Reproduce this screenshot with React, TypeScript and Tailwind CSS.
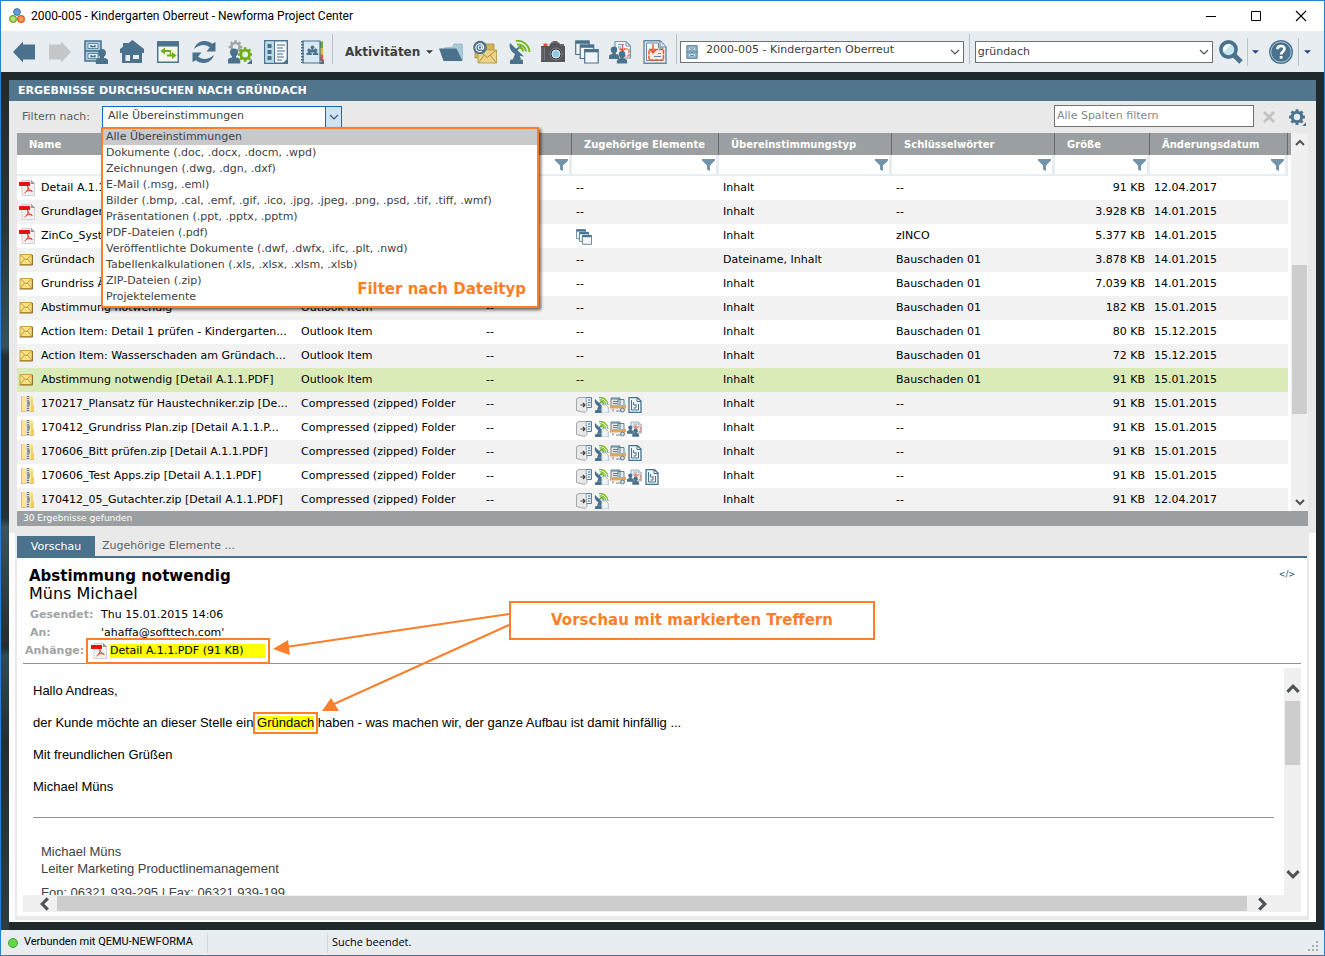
import React from "react";

type IconProps = { className?: string };
const B = "#4a728c";

const Svg = ({ children, className = "size-6", box = "0 0 24 24" }: { children: React.ReactNode; className?: string; box?: string }) => (
  <svg viewBox={box} className={`shrink-0 ${className}`} aria-hidden="true">
    {children}
  </svg>
);

const Bust = ({ x, y, s = 1 }: { x: number; y: number; s?: number }) => (
  <g transform={`translate(${x} ${y}) scale(${s})`} fill={B}>
    <circle cx="6" cy="4" r="3.9" />
    <path d="M4 6h4v3c3 .3 4.200 1.300 4.200 3.800V15H-.2v-2.200C-.2 10.300 1 9.300 4 9z" />
  </g>
);

const Gear = ({ x, y, r, c }: { x: number; y: number; r: number; c: string }) => (
  <g transform={`translate(${x} ${y})`} fill="none" stroke={c}>
    <circle r={r * 0.6} strokeWidth={r * 0.38} />
    {[0, 45, 90, 135].map((a) => (
      <g key={a} transform={`rotate(${a})`}>
        <path d={`M0 ${-r}V${-r * 0.7}M0 ${r}V${r * 0.7}`} strokeWidth={r * 0.36} />
      </g>
    ))}
  </g>
);

const BackIcon = () => <Svg><path fill={B} d="M1 12 11 1.500V4.500H23V19.500H11V22.500Z" /></Svg>;
const ForwardIcon = () => <Svg><path fill="#c4c6c8" d="M23 12 13 1.500V4.500H1V19.500H13V22.500Z" /></Svg>;

const CabinetShape = () => (
  <g stroke={B}>
    <path d="M1 1h16v20H1z" fill="#a9cde4" strokeWidth="1.600" />
    <path d="M1 11h16" strokeWidth="1.600" />
    <path d="M4 3.500h10v5H4zM4 13.500h10v5H4z" fill="#e3f1f9" strokeWidth=".8" />
    <path d="M7 5v1.500h4V5M7 15v1.500h4V15" fill="none" strokeWidth="1.400" />
  </g>
);
const CabinetUserIcon = () => <Svg><CabinetShape /><Bust x={12} y={9} /></Svg>;
const CabinetIcon = () => <Svg className="h-[14px] w-3" box="0 0 18 22"><CabinetShape /></Svg>;
const HomeIcon = () => (
  <Svg>
    <path fill={B} d="M12.500 0 24 9v4h-2v10H2V13H0V9l3-2.300V3h5v.5z" />
    <path fill="#e8edf1" d="M5.500 15H10v6H5.500zM13 15h6v4h-6z" />
  </Svg>
);
const ExchangeIcon = () => (
  <Svg>
    <path d="M1.700 2h20.600v20.300H1.700z" fill="#f4f5ec" stroke={B} strokeWidth="1.400" />
    <path d="M1 1.300h22V6.500H1z" fill={B} />
    <path d="M4.500 11 9 7.500V10h5v2H9v2.500zM20.500 15.500 16 12v2.500h-5v2h5V19z" fill="#6dae14" />
    <path d="M13 11h1.500v4" fill="none" stroke="#6dae14" strokeWidth="1.500" />
  </Svg>
);
const RefreshIcon = () => (
  <Svg>
    <path fill={B} d="M2 9C4 3.500 8 1 12.500 1c3 0 5.500 1 7.500 2.800L23.500 2v9.500h-9l3.200-4C15 4.500 8 3.500 2 9z" />
    <path fill={B} d="M22 15c-2 5.500-6 8-10.500 8-3 0-5.500-1-7.500-2.800L.5 22v-9.500h9l-3.200 4C9 19.500 16 20.500 22 15z" />
  </Svg>
);
const UserGearsIcon = () => (
  <Svg>
    <Gear x={7.500} y={7} r={6.800} c="#a2a6a8" />
    <Bust x={0} y={8.500} s={1} />
    <Gear x={17.200} y={14.500} r={7.200} c="#6dae14" />
    <path d="M24 19v5h-5z" fill={B} />
  </Svg>
);
const ListIcon = () => (
  <Svg>
    <path d="M.7.7h22.600v22.600H.7z" fill="#f4f7f9" stroke={B} strokeWidth="1.400" />
    <path d="M1.500 1.500h8.500v21H1.500z" fill="#b9dced" />
    <path d="M3.500 4h4v4h-4zM3.500 10h4v4h-4zM3.500 16h4v4h-4z" fill={B} />
    <path d="M10.500 1v22M13 5h8M13 8h6M13 11h8M13 14h6M13 17h7M13 20h5" stroke={B} strokeWidth="1" />
    <path d="M24 18v6h-6z" fill={B} />
  </Svg>
);
const ContactsIcon = () => (
  <Svg>
    <path d="M20 1.500h3v6.500h-3z" fill="#69a82a" /><path d="M20 8h3v6.500h-3z" fill="#e3b43a" /><path d="M20 14.500h3V21h-3z" fill="#dc5a35" />
    <path d="M3 1h17v22H3z" fill="#d6e8f2" stroke={B} strokeWidth="1.200" />
    <path d="M2.500 1v22" stroke={B} strokeWidth="3" strokeDasharray="1.500 1.500" />
    <Bust x={6.500} y={8.500} s={0.44} /><Bust x={13} y={8.500} s={0.44} /><Bust x={9.700} y={5.500} s={0.46} />
    <path d="M24 19v5h-5z" fill={B} />
  </Svg>
);
const FolderIcon = () => (
  <Svg>
    <path d="M5 8 14 7l1-3h8l.5 2v14l-4 1z" fill="#a9cbd8" stroke="#7fa9ba" strokeWidth=".6" />
    <path d="M0 8.500h17.500L23.500 21H4.500z" fill={B} />
  </Svg>
);
const MailIcon = () => (
  <Svg>
    <path d="M2 4h19v14H2z" fill="#cfb45c" stroke="#b59a49" />
    <path d="M5 10h18.500v13H5z" fill="#ecd58a" stroke="#bda152" />
    <path d="m5 10 9.200 7.500L23.500 10M5 23l6.500-8M23.500 23 17 15" fill="none" stroke="#b08f3d" />
    <circle cx="7" cy="7.500" r="6.800" fill={B} />
    <circle cx="7" cy="7.500" r="1.800" fill="none" stroke="#fff" strokeWidth="1.100" />
    <path d="M8.800 5.500v3c0 1.200 2 1.200 2-.8A4 4 0 1 0 9 11" fill="none" stroke="#fff" strokeWidth="1.100" />
  </Svg>
);
const DishShape = () => (
  <g>
    <path d="M3 3C1 9 6 16 17 16.500zM8 14l-2 5h8l-2-5z" fill={B} />
    <path d="m9 10 5-4" stroke={B} strokeWidth="1.800" />
    <path d="M3 20.500C3 18.500 16 18.500 16 20.500V24H3z" fill={B} />
    <path d="M9 1c7-1 13 4 13.500 11M10 4.500c5-.5 8.500 3 9 7M11.500 7.500c2.500 0 4.500 1.500 4.500 4" fill="none" stroke="#78b81c" strokeWidth="2" />
  </g>
);
const DishIcon = () => <Svg><DishShape /></Svg>;
const CameraIcon = () => (
  <Svg>
    <path d="M2.500 3.500h4V6h-4z" fill="#e5512c" />
    <path d="M0 6h8l2-3.500h8L20 6h4v16H0z" fill="#55565a" />
    <path d="M1 7.500v13M3.500 7.500v13" stroke="#77787c" />
    <path d="M11.500 1h5v2h-5zM19 4h4v2h-4z" fill="#66676b" />
    <circle cx="15" cy="14" r="6" fill="#3a3b3f" stroke="#85878b" />
    <circle cx="15" cy="14" r="4" fill="#8fcbe0" stroke="#e2eff5" />
  </Svg>
);
const WindowsShape = () => (
  <g stroke={B}>
    {[[0.7, 1], [5.200, 5], [9.700, 9.500]].map(([x, y]) => (
      <g key={x}>
        <path d={`M${x} ${y}h13.500v13.500H${x}z`} fill="#f4f5f6" strokeWidth="1.200" />
        <path d={`M${x} ${y + 1.200}h13.500`} strokeWidth="3.200" />
      </g>
    ))}
  </g>
);
const WindowsIcon = ({ className = "size-6" }: IconProps) => <Svg className={className}><WindowsShape /></Svg>;
const MarkupUsersIcon = ({ className = "size-6" }: IconProps) => (
  <Svg className={className}>
    <path d="M6 1.500h11l4.500 4.500v12H6z" fill="#edf3f7" stroke="#7e9aac" strokeWidth="1.200" />
    <path d="M9 4.500h6M9 7h3M17 2v4h4" fill="none" stroke="#7e9aac" />
    <path d="M10 9h10v7h-6" fill="none" stroke="#e75d36" strokeWidth="1.200" strokeDasharray="4 1" />
    <path d="M13.500 5v6M11 8.500l2.500 3 2.500-3" fill="none" stroke="#e75d36" strokeWidth="1.300" />
    <Bust x={0} y={6.500} s={0.83} /><Bust x={8} y={11} s={0.83} />
  </Svg>
);
const MarkupIcon = () => (
  <Svg>
    <path d="M1 .8h16L23 7v16.200H1z" fill="#f2f5f7" stroke="#6585a0" strokeWidth="1.400" />
    <path d="M3.500 3h12v5H20v12.500H3.500z" fill="none" stroke="#6585a0" />
    <path d="M17 1v6h6" fill="#dfe8ee" stroke="#6585a0" />
    <path d="M6 9.500h14.500V20H6z" fill="#f7ebe6" stroke="#e9562e" strokeWidth="1.500" strokeDasharray="4 1" />
    <path d="M10 4v8M7 9.500l3 3.500 3-3.500" fill="none" stroke="#e9562e" strokeWidth="1.400" />
    <path d="M11 16.500h7M15 13.500h3" stroke="#6585a0" />
  </Svg>
);
const SearchIcon = () => (
  <Svg>
    <path d="m15 15 7 7" stroke={B} strokeWidth="5" />
    <circle cx="9.500" cy="9.500" r="7.600" fill="#c9e6ef" stroke={B} strokeWidth="3.600" />
    <path d="M4.500 12 12 4.500A6 6 0 0 0 4.500 12z" fill="#fff" />
  </Svg>
);
const HelpIcon = () => (
  <Svg>
    <circle cx="12" cy="12" r="12" fill={B} />
    <circle cx="12" cy="12" r="10.200" fill="none" stroke="#a9c9dc" />
    <path d="M8.500 9.200C8.500 5 15.800 5 15.500 9.200c-.2 2.600-3.400 2.800-3.400 5.300" fill="none" stroke="#fff" strokeWidth="2.600" />
    <path d="M10.700 16h2.800v2.700h-2.800z" fill="#fff" />
  </Svg>
);
const LogoIcon = () => (
  <Svg className="size-4" box="0 0 16 16">
    <circle cx="8" cy="4" r="3.400" fill="#5f9fd0" stroke="#3c78ab" />
    <circle cx="4" cy="11" r="3.300" fill="#b7e07c" stroke="#69aa24" strokeWidth="1.300" />
    <circle cx="12" cy="11" r="3.300" fill="#f59a5c" stroke="#e25a18" strokeWidth="1.300" />
  </Svg>
);
const PdfIcon = () => (
  <Svg className="size-4" box="0 0 16 16">
    <path d="M3 .5h9l3.500 3.500v11.500H3z" fill="#f1f1f2" stroke="#d3d3d5" />
    <path d="M12 0v4h4z" fill="#929497" />
    <path d="M0 2h11v4H0z" fill="#e8120c" />
    <path d="M8.500 6c.5 2.500 2 4.500 5 5.500M9.200 7C9 10 7.500 12 5.500 13M7 11.300c2-.8 4-.9 6-.3" fill="none" stroke="#d93b36" />
  </Svg>
);
const EnvelopeIcon = () => (
  <Svg className="size-4" box="0 0 16 16">
    <path d="M1 2.500h12v10H1z" fill="#fbe287" stroke="#c9a040" />
    <path d="m1.500 3 5.500 5 5.500-5M1.500 12l4-5M12.500 12l-4-5" fill="none" stroke="#c39a35" />
    <path d="M.5 13h13M13.500 3v10" stroke="#94712a" />
  </Svg>
);
const ZipIcon = () => (
  <Svg className="size-4" box="0 0 16 16">
    <path d="M2 0h12v16H2z" fill="#fbe596" />
    <path d="M2.500 0v16M13 3v13M2 15.500h13" stroke="#e6c451" />
    <path d="M12 9h3v6h-3z" fill="#f0cd5c" />
    <path d="M7 0h4v16H7z" fill="#d9d9d4" />
    <path d="M9 0v16" stroke="#6d7072" strokeWidth="2" strokeDasharray="1 1" />
    <path d="M8 5h3v5H8z" fill="#80858a" stroke="#e6e6e6" strokeWidth=".5" />
  </Svg>
);
const TransferIcon = () => (
  <Svg className="size-4" box="0 0 16 16">
    <path d="M7.500.5h8v10h-8z" fill="#e0edf5" stroke="#557f9a" />
    <path d="M12 3h2.500M12 5.500h2.500M12 8h2" stroke="#557f9a" />
    <path d="M.5 2 3 .5h7l1 13-2 2L.5 13.500z" fill="#e8e8e8" stroke="#a8a8a8" />
    <path d="M4.500 8h4M7 6l2 2-2 2" fill="none" stroke="#3f4244" strokeWidth="1.200" />
  </Svg>
);
const DishDocIcon = () => (
  <Svg className="size-4">
    <DishShape />
    <path d="M13 11.500h6l4 4V24H13z" fill="#eef5fa" stroke="#8ea9ba" />
  </Svg>
);
const DeskIcon = () => (
  <Svg className="size-4" box="0 0 16 16">
    <path d="M1 1h9v8H1zM8 2.500h6V9H8z" fill="#e3eaef" stroke="#5f7f95" />
    <path d="M1 2h9M3 4.500h5M3 6.500h4" stroke="#5f7f95" />
    <path d="M0 8h16v3.500H0z" fill="#e7a55a" />
    <path d="M3 12v2.500M6 14h5" stroke="#6d7f8a" />
    <circle cx="12.500" cy="13" r="2" fill="#c6d8e4" stroke="#5f7f95" />
  </Svg>
);
const DocIcon = () => (
  <Svg className="size-4" box="0 0 16 16">
    <path d="M2 .7h8.500L14 4v11.300H2z" fill="#eff5f9" stroke={B} strokeWidth="1.300" />
    <path d="M10 1v3.500h4M4.500 3v10h7V7M6.500 5v3h2M9 7v4H6.500" fill="none" stroke={B} />
  </Svg>
);
const FunnelIcon = () => <Svg className="h-3 w-[13px]" box="0 0 13 12"><path d="M0 0h13v1.500L8 6.500V12L5 10.500v-4L0 1.500z" fill="#7393a8" /></Svg>;
const Chevron = ({ className = "", w = 1.200 }: IconProps & { w?: number }) => (
  <svg viewBox="0 0 10 10" className={`size-[10px] shrink-0 ${className}`} aria-hidden="true">
    <path d="m1 3 4 4 4-4" fill="none" stroke="#505356" strokeWidth={w} />
  </svg>
);
const Caret = ({ color = "#27498a" }: { color?: string }) => (
  <svg viewBox="0 0 8 4" className="h-1 w-[7px]" aria-hidden="true"><path d="M0 0h8L4 4z" fill={color} /></svg>
);

const nav: [string, React.FC][] = [
  ["Zurück", BackIcon], ["Vorwärts", ForwardIcon], ["Meine Projekte", CabinetUserIcon], ["Startseite", HomeIcon],
  ["Wechseln", ExchangeIcon], ["Aktualisieren", RefreshIcon], ["Benutzeroptionen", UserGearsIcon], ["Listen", ListIcon], ["Kontakte", ContactsIcon],
];
const actions: [string, React.FC][] = [
  ["Ordner", FolderIcon], ["E-Mail", MailIcon], ["Übertragung", DishIcon], ["Bilder", CameraIcon],
  ["Fenster", WindowsIcon], ["Prüfung", MarkupUsersIcon], ["Markierung", MarkupIcon],
];

const filters = [
  "Alle Übereinstimmungen", "Dokumente (.doc, .docx, .docm, .wpd)", "Zeichnungen (.dwg, .dgn, .dxf)", "E-Mail (.msg, .eml)",
  "Bilder (.bmp, .cal, .emf, .gif, .ico, .jpg, .jpeg, .png, .psd, .tif, .tiff, .wmf)", "Präsentationen (.ppt, .pptx, .pptm)",
  "PDF-Dateien (.pdf)", "Veröffentlichte Dokumente (.dwf, .dwfx, .ifc, .plt, .nwd)", "Tabellenkalkulationen (.xls, .xlsx, .xlsm, .xlsb)",
  "ZIP-Dateien (.zip)", "Projektelemente",
];

type Row = { icon: "pdf" | "mail" | "zip"; name: string; type: string; rel: string; match: string; key: string; size: string; date: string };
const row = (icon: Row["icon"], name: string, rel: string, match: string, key: string, size: string, date: string): Row => ({
  icon, name, rel, match, key, size, date,
  type: icon === "pdf" ? "PDF" : icon === "mail" ? "Outlook Item" : "Compressed (zipped) Folder",
});
const rows: Row[] = [
  row("pdf", "Detail A.1.1.PDF", "", "Inhalt", "--", "91 KB", "12.04.2017"),
  row("pdf", "Grundlagen.pdf", "", "Inhalt", "--", "3.928 KB", "14.01.2015"),
  row("pdf", "ZinCo_System.pdf", "w", "Inhalt", "zINCO", "5.377 KB", "14.01.2015"),
  row("mail", "Gründach", "", "Dateiname, Inhalt", "Bauschaden 01", "3.878 KB", "14.01.2015"),
  row("mail", "Grundriss Änderung", "", "Inhalt", "Bauschaden 01", "7.039 KB", "14.01.2015"),
  row("mail", "Abstimmung notwendig", "", "Inhalt", "Bauschaden 01", "182 KB", "15.01.2015"),
  row("mail", "Action Item: Detail 1 prüfen - Kindergarten...", "", "Inhalt", "Bauschaden 01", "80 KB", "15.12.2015"),
  row("mail", "Action Item: Wasserschaden am Gründach...", "", "Inhalt", "Bauschaden 01", "72 KB", "15.12.2015"),
  row("mail", "Abstimmung notwendig [Detail A.1.1.PDF]", "", "Inhalt", "Bauschaden 01", "91 KB", "15.01.2015"),
  row("zip", "170217_Plansatz für Haustechniker.zip [De...", "tskd", "Inhalt", "--", "91 KB", "15.01.2015"),
  row("zip", "170412_Grundriss Plan.zip [Detail A.1.1.P...", "tskm", "Inhalt", "--", "91 KB", "15.01.2015"),
  row("zip", "170606_Bitt prüfen.zip [Detail A.1.1.PDF]", "tskd", "Inhalt", "--", "91 KB", "15.01.2015"),
  row("zip", "170606_Test Apps.zip [Detail A.1.1.PDF]", "tskmd", "Inhalt", "--", "91 KB", "15.01.2015"),
  row("zip", "170412_05_Gutachter.zip [Detail A.1.1.PDF]", "ts", "Inhalt", "--", "91 KB", "12.04.2017"),
];
const headers = ["Name", "Typ", "", "Zugehörige Elemente", "Übereinstimmungstyp", "Schlüsselwörter", "Größe", "Änderungsdatum"];

const relIcon = (k: string, i: number) => {
  if (k === "t") return <TransferIcon key={i} />;
  if (k === "s") return <DishDocIcon key={i} />;
  if (k === "k") return <DeskIcon key={i} />;
  if (k === "m") return <MarkupUsersIcon key={i} className="size-4" />;
  if (k === "w") return <WindowsIcon key={i} className="size-4" />;
  return <DocIcon key={i} />;
};

const Divider = () => <div className="mb-2 mt-[2px] w-px self-stretch bg-[#b9bec2]" />;

function TitleBar() {
  return (
    <header className="flex h-[30px] shrink-0 items-center bg-white pl-2 font-[Roboto,sans-serif] text-xs text-black">
      <LogoIcon />
      <h1 className="ml-[6px]">2000-005 - Kindergarten Oberreut - Newforma Project Center</h1>
      <div className="ml-auto flex">
        <button aria-label="Minimieren" className="flex h-[30px] w-[45px] items-center justify-center">
          <svg viewBox="0 0 12 12" className="size-3"><path d="M1 6.500h10" stroke="#000" /></svg>
        </button>
        <button aria-label="Maximieren" className="flex h-[30px] w-[45px] items-center justify-center">
          <svg viewBox="0 0 12 12" className="size-3"><path d="M1.500 1.500h9v9h-9z" fill="none" stroke="#000" /></svg>
        </button>
        <button aria-label="Schließen" className="flex h-[30px] w-[46px] items-center justify-center">
          <svg viewBox="0 0 12 12" className="size-3"><path d="m1 1 10 10M11 1 1 11" stroke="#000" strokeWidth="1.100" /></svg>
        </button>
      </div>
    </header>
  );
}

function Toolbar() {
  return (
    <nav className="flex h-[41px] shrink-0 items-center bg-[#e8edf1] pl-[5px] pt-px text-[#3b3e40]">
      {nav.map(([label, Icon]) => (
        <button key={label} aria-label={label} className="flex w-9 justify-center"><Icon /></button>
      ))}
      <div className="ml-[2px] flex self-stretch"><Divider /></div>
      <button className="ml-3 flex w-[89px] items-center gap-[6px] text-xs font-bold">
        Aktivitäten <Caret color="#3b3e40" />
      </button>
      {actions.map(([label, Icon]) => (
        <button key={label} aria-label={label} className="flex w-[34px] justify-center"><Icon /></button>
      ))}
      <div className="ml-1 mr-[3px] flex self-stretch"><Divider /></div>
      <div className="flex h-[22px] flex-[284_1_0] items-center border border-[#6e7275] bg-white">
        <span className="ml-[5px]"><CabinetIcon /></span>
        <select aria-label="Projekt" className="h-full w-full appearance-none bg-transparent pb-[3px] pl-2 text-[11px] outline-none">
          <option>2000-005 - Kindergarten Oberreut</option>
        </select>
        <Chevron className="mr-[3px]" />
      </div>
      <div className="mx-[5px] flex self-stretch"><Divider /></div>
      <div className="flex h-[22px] flex-[238_1_0] items-center border border-[#6e7275] bg-white">
        <input aria-label="Suchbegriff" defaultValue="gründach" className="h-full w-full min-w-0 pb-px pl-[2px] text-[11px] outline-none" />
        <Chevron className="mr-[3px]" />
      </div>
      <button aria-label="Suchen" className="ml-[6px]"><SearchIcon /></button>
      <div className="ml-1 h-7 w-px bg-[#b9c3ca]" />
      <button aria-label="Suchoptionen" className="ml-1"><Caret /></button>
      <button aria-label="Hilfe" className="ml-[10px]"><HelpIcon /></button>
      <div className="ml-[5px] h-7 w-px bg-[#b9c3ca]" />
      <button aria-label="Hilfeoptionen" className="ml-[5px] mr-[13px]"><Caret /></button>
    </nav>
  );
}

function FilterList() {
  return (
    <div className="absolute -left-[2px] top-5 z-10 h-[181px] w-[438px] border-2 border-[#fb7f2b] bg-white shadow-[2px_2px_3px_#0009]">
      <ul role="listbox" aria-label="Dateityp">
        {filters.map((f, i) => (
          <li key={f} role="option" aria-selected={i === 0} className={i === 0 ? "h-4 bg-[#c9c9c9] pl-[3px] leading-[15px]" : "h-4 pl-[3px] leading-[15px]"}>{f}</li>
        ))}
      </ul>
      <strong className="absolute bottom-[7px] right-[11px] text-[15px] leading-5 text-[#fb7f2b]">Filter nach Dateityp</strong>
    </div>
  );
}

function FilterBar() {
  return (
    <div className="flex h-8 shrink-0 items-center pl-[13px] pr-[10px] text-[11px] text-[#5a5c5e]">
      <label htmlFor="filter" className="w-20">Filtern nach:</label>
      <div className="relative flex h-[22px] w-60 items-center border border-[#0a6fc2] bg-white text-[#3f4143]">
        <select id="filter" className="h-full flex-1 appearance-none bg-transparent pb-px pl-[5px] outline-none">
          <option>Alle Übereinstimmungen</option>
        </select>
        <span className="flex h-full w-4 items-center justify-center border-l border-[#0a6fc2] bg-[#cce4f7]"><Chevron /></span>
        <FilterList />
      </div>
      <input aria-label="Alle Spalten filtern" placeholder="Alle Spalten filtern" className="ml-auto mb-[2px] h-[22px] w-[200px] border border-[#6e7275] bg-white pb-px pl-[2px] outline-none placeholder:text-[#85888a]" />
      <button aria-label="Filter löschen" className="ml-[9px]">
        <svg viewBox="0 0 12 12" className="size-3"><path d="m1 1 10 10M11 1 1 11" stroke="#c3c3c3" strokeWidth="3" /></svg>
      </button>
      <button aria-label="Einstellungen" className="ml-[13px]">
        <Svg className="size-[18px]"><Gear x={12} y={12} r={10.500} c={B} /><path d="M24 19v5h-5z" fill={B} /></Svg>
      </button>
    </div>
  );
}

function ResultTable() {
  return (
    <div className="mx-2 flex h-[378px] shrink-0 overflow-hidden bg-white">
      <div className="min-w-0 flex-1">
        <table className="w-full table-fixed border-separate border-spacing-0 text-[11px] text-black">
          <colgroup>
            <col /><col className="w-[185px]" /><col className="w-[90px]" /><col className="w-[147px]" /><col className="w-[173px]" />
            <col className="w-[163px]" /><col className="w-[95px]" /><col className="w-[138px]" /><col className="w-[3px]" />
          </colgroup>
          <thead>
            <tr className="h-[22px] bg-[#9b9fa1] text-left text-[10px] text-white">
              {headers.map((h, i) => (
                <th key={i} className="whitespace-nowrap border-r border-[#66696b] py-0 pl-3 font-bold">{h}</th>
              ))}
              <td className="p-0" />
            </tr>
            <tr className="h-[21px]">
              {headers.map((h, i) => (
                <td key={i} className="h-[21px] border-b-2 border-r-3 border-[#e8edf1] p-0">
                  <div className="flex items-center pr-px">
                    <input aria-label={`${h} filtern`} className="h-[18px] w-full min-w-0 outline-none" />
                    <button aria-label={`${h}: Filteroptionen`}><FunnelIcon /></button>
                  </div>
                </td>
              ))}
              <td className="p-0" />
            </tr>
          </thead>
          <tbody>
            {rows.map((r, i) => (
              <tr key={i} className={i === 8 ? "h-6 bg-[#dbebb7]" : i % 2 ? "h-6 bg-[#f2f2f2]" : "h-6 bg-white"}>
                <td className="p-0 pl-[2px]">
                  <div className="flex items-center gap-[6px] whitespace-nowrap">
                    {r.icon === "pdf" ? <PdfIcon /> : r.icon === "mail" ? <EnvelopeIcon /> : <ZipIcon />}
                    <span className="pt-px">{r.name}</span>
                  </div>
                </td>
                <td className="p-0 pl-1 pt-px">{r.type}</td>
                <td className="p-0 pl-1 pt-px">--</td>
                <td className="p-0 pl-1 pt-px">{r.rel ? <div className="flex gap-px">{r.rel.split("").map(relIcon)}</div> : "--"}</td>
                <td className="p-0 pl-1 pt-px">{r.match}</td>
                <td className="p-0 pl-1 pt-px">{r.key}</td>
                <td className="p-0 pr-[5px] pt-px text-right">{r.size}</td>
                <td className="p-0 pl-1 pt-px">{r.date}</td>
                <td className="bg-white p-0" />
              </tr>
            ))}
          </tbody>
        </table>
      </div>
      <div className="flex w-[17px] flex-col items-center bg-[#f0f0f0] py-1">
        <Chevron className="mt-px rotate-180" w={2} />
        <div className="mt-[117px] h-[149px] w-[15px] bg-[#cdcdcd]" />
        <Chevron className="mt-auto" w={2} />
      </div>
    </div>
  );
}

function MailHeader() {
  return (
    <div className="relative shrink-0 text-[11px] text-black">
      <div className="flex items-start justify-between pl-3 pr-3 pt-[9px]">
        <div className="leading-[18px]">
          <h2 className="text-[15px] font-bold">Abstimmung notwendig</h2>
          <p className="text-base leading-[18px]">Müns Michael</p>
        </div>
        <button aria-label="Quelltext anzeigen" className="pt-[2px] text-[8px] font-bold text-[#4a728c]">&lt;/&gt;</button>
      </div>
      <dl className="mx-[6px] mt-[3px] h-[58px] border-b border-[#8f9395] leading-[18px]">
        <div className="flex pl-[7px]"><dt className="w-[71px] font-bold text-[#a2a4a5]">Gesendet:</dt><dd>Thu 15.01.2015 14:06</dd></div>
        <div className="flex pl-[7px]"><dt className="w-[71px] font-bold text-[#a2a4a5]">An:</dt><dd>'ahaffa@softtech.com'</dd></div>
        <div className="flex items-center pl-[2px]">
          <dt className="w-[61px] font-bold text-[#a2a4a5]">Anhänge:</dt>
          <dd className="-my-1 flex h-[26px] w-[184px] items-center gap-[3px] border-2 border-[#fb7f2b] bg-white pl-[3px] pr-[3px]">
            <PdfIcon />
            <a href="#anhang" className="flex-1 whitespace-nowrap bg-[#ffff00] leading-[14px]">Detail A.1.1.PDF (91 KB)</a>
          </dd>
        </div>
      </dl>
      <div className="absolute left-[492px] top-[43px] flex h-[39px] w-[366px] items-center justify-center border-2 border-[#fb7f2b] bg-white text-[15px] font-bold text-[#fb7f2b]">
        Vorschau mit markierten Treffern
      </div>
      <svg viewBox="0 0 240 110" className="pointer-events-none absolute left-[253px] top-[52px] z-10 h-[110px] w-[240px]" aria-hidden="true">
        <path d="M239 4 16 37M239 15 64 94" stroke="#fb7f2b" strokeWidth="2" />
        <path d="M3 39 18 30 20 45zM52 101 61 88 69 101z" fill="#fb7f2b" />
      </svg>
    </div>
  );
}

function MailBody() {
  return (
    <div className="mx-[6px] mb-1 mt-1 flex min-h-0 flex-1 flex-col">
      <div className="flex min-h-0 flex-1">
        <article className="min-w-0 flex-1 overflow-hidden pl-[10px] pr-[10px] pt-[15px] font-['Liberation_Sans',Arial,sans-serif] text-[13px] leading-4 text-black">
          <p className="mb-4">Hallo Andreas,</p>
          <p className="mb-4">
            der Kunde möchte an dieser Stelle ein <mark className="inline-block bg-[#ffff00] leading-[14px] text-black outline-2 outline-offset-2 outline-[#fb7f2b]">Gründach</mark> haben - was machen wir, der ganze Aufbau ist damit hinfällig ...
          </p>
          <p className="mb-4">Mit freundlichen Grüßen</p>
          <p>Michael Müns</p>
          <hr className="mb-[25px] mt-[22px] border-[#8f9395]" />
          <address className="pl-2 not-italic leading-[17px] text-[#414244]">
            Michael Müns<br />Leiter Marketing Productlinemanagement
            <p className="mt-[7px]">Fon: 06321 939-295 | Fax: 06321 939-199</p>
          </address>
        </article>
        <div className="flex w-[17px] flex-col items-center bg-[#f0f0f0] py-[14px]">
          <Chevron className="size-[14px] rotate-180" w={2.200} />
          <div className="mt-[5px] h-16 w-[15px] bg-[#cdcdcd]" />
          <Chevron className="mt-auto size-[14px]" w={2.200} />
        </div>
      </div>
      <div className="flex h-[17px] shrink-0 items-center bg-[#f0f0f0] pl-[15px] pr-8">
        <Chevron className="size-[14px] rotate-90" w={2.200} />
        <div className="ml-[5px] mr-2 h-[15px] flex-1 bg-[#cdcdcd]" />
        <Chevron className="size-[14px] -rotate-90" w={2.200} />
      </div>
    </div>
  );
}

function Preview() {
  return (
    <section className="mt-[7px] flex min-h-0 flex-1 flex-col border-b-2 border-l-6 border-r-7 border-[#fdfdfd] bg-[#e9e9e9] px-[2px] pb-1 pt-[3px]">
      <div className="flex h-[22px] shrink-0 items-stretch border-b-2 border-[#4a728c] text-[11px] text-[#5f6163]" role="tablist">
        <button role="tab" aria-selected="true" className="w-[78px] bg-[#4a728c] pt-[2px] text-white">Vorschau</button>
        <button role="tab" aria-selected="false" className="pl-[7px] pt-px">Zugehörige Elemente ...</button>
      </div>
      <div className="flex min-h-0 flex-1 flex-col bg-white">
        <MailHeader />
        <MailBody />
      </div>
    </section>
  );
}

export default function App() {
  return (
    <div className="flex h-screen min-h-[700px] flex-col overflow-hidden border border-[#2380d3] bg-[#e8edf1] font-['DejaVu_Sans',Verdana,sans-serif]">
      <TitleBar />
      <Toolbar />
      <main className="flex min-h-0 flex-1 bg-[#202a2d] py-2 pr-2">
        <div className="-my-2 w-2 shrink-0 bg-[linear-gradient(180deg,#202a2d,#26363d_18%,#35505e_32%,#20313a_33%,#233239_52%,#3a5462_53%,#202c31_67%,#2f4a58_68%,#1f2e36_78%,#2b3d47)]" />
        <div className="flex min-w-0 flex-1 flex-col bg-[#e9e9e9]">
          <h2 className="h-[21px] shrink-0 bg-[#50758c] pl-[9px] text-[11px] font-bold leading-[21px] text-white">ERGEBNISSE DURCHSUCHEN NACH GRÜNDACH</h2>
          <FilterBar />
          <ResultTable />
          <p className="mx-2 h-[15px] shrink-0 bg-[#9b9fa1] pl-[6px] text-[9px] leading-[15px] text-white">30 Ergebnisse gefunden</p>
          <Preview />
        </div>
      </main>
      <footer className="flex h-[25px] shrink-0 items-center bg-[#e8edf1] pl-[7px] font-['Open_Sans',sans-serif] text-[11px] text-black">
        <span className="size-[10px] rounded-full border border-[#3ea42d] bg-[#63d94a]" />
        <span className="ml-[6px] w-[183px] font-[Roboto,sans-serif]">Verbunden mit QEMU-NEWFORMA</span>
        <span className="h-5 w-[121px] border-x border-[#d0d6da]" />
        <span className="ml-1">Suche beendet.</span>
        <svg viewBox="0 0 12 12" className="ml-auto mr-1 mt-2 size-3" aria-hidden="true">
          <path d="M8 0h2v2H8zM4 4h2v2H4zM8 4h2v2H8zM0 8h2v2H0zM4 8h2v2H4zM8 8h2v2H8z" fill="#a5abaf" />
        </svg>
      </footer>
    </div>
  );
}
